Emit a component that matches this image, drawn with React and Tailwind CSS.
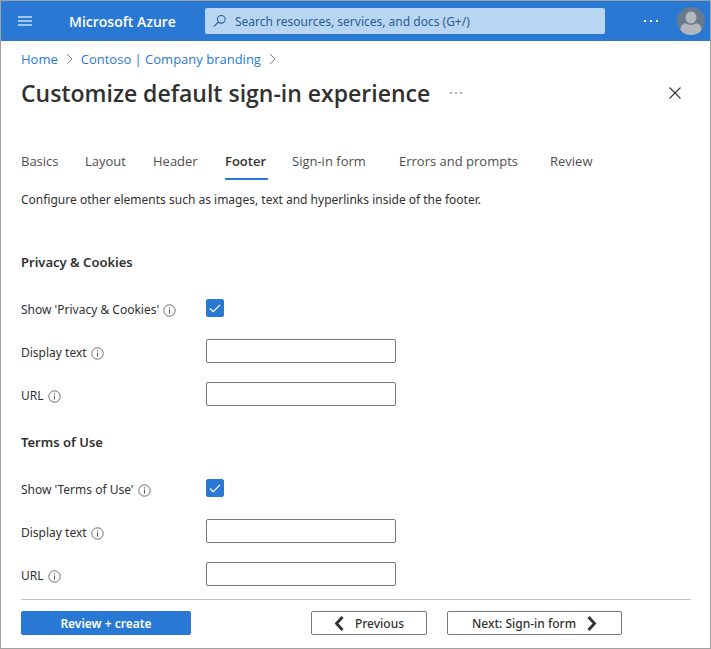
const tabs = [
  { label: "Basics", width: "w-[40px]" },
  { label: "Layout", width: "w-[44px]" },
  { label: "Header", width: "w-[48px]" },
  { label: "Footer", width: "w-[43px]", active: true },
  { label: "Sign-in form", width: "w-[83px]" },
  { label: "Errors and prompts", width: "w-[127px]" },
  { label: "Review", width: "w-[48px]" },
];

const sections = [
  { id: "privacy", title: "Privacy & Cookies", toggle: "Show 'Privacy & Cookies'" },
  { id: "terms", title: "Terms of Use", toggle: "Show 'Terms of Use'" },
];

function InfoIcon() {
  return (
    <svg width="13" height="13" viewBox="0 0 13 13" fill="none" stroke="#605e5c" className="shrink-0" aria-hidden="true">
      <circle cx="6.5" cy="6.5" r="5.700" strokeWidth="0.900" />
      <path d="M6.5 5.500v4.200M6.5 3.300v1.200" />
    </svg>
  );
}

function Crumb() {
  return (
    <svg width="7" height="12" viewBox="0 0 7 12" fill="none" stroke="#8a8886" className="shrink-0" aria-hidden="true">
      <path d="M1 1l5 5-5 5" />
    </svg>
  );
}

function FieldLabel({ htmlFor, children }) {
  return (
    <label htmlFor={htmlFor} className="flex w-[185px] shrink-0 items-center gap-1 whitespace-nowrap pt-1 text-[12px] leading-5">
      {children}
      <InfoIcon />
    </label>
  );
}

function TextRow({ id, label }) {
  return (
    <div className="flex h-6 items-center">
      <FieldLabel htmlFor={id}>{label}</FieldLabel>
      <input id={id} type="text" className="h-6 w-[190px] rounded-[2px] border border-[#7a7978] bg-white px-2 text-[12px] outline-none" />
    </div>
  );
}

function Section({ id, title, toggle }) {
  return (
    <section>
      <h2 className="text-[13px] font-semibold leading-6">{title}</h2>
      <div className="mt-[22px] flex flex-col gap-[19px]">
        <div className="flex h-6 items-center">
          <FieldLabel htmlFor={id + "-show"}>{toggle}</FieldLabel>
          <span className="grid place-items-center">
            <input id={id + "-show"} type="checkbox" defaultChecked className="peer col-start-1 row-start-1 size-[18px] appearance-none rounded-[2px] border border-[#7a7978] checked:border-[#2979d4] checked:bg-[#2979d4]" />
            <svg width="12" height="9" viewBox="0 0 12 9" fill="none" stroke="white" strokeWidth="1.2" className="pointer-events-none col-start-1 row-start-1 hidden peer-checked:block" aria-hidden="true">
              <path d="M1 4.5l3.2 3.2L11 1" />
            </svg>
          </span>
        </div>
        <TextRow id={id + "-text"} label="Display text" />
        <TextRow id={id + "-url"} label="URL" />
      </div>
    </section>
  );
}

export default function App() {
  return (
    <div className="border border-[#a0a0a0] bg-white font-['Noto_Sans','Open_Sans',sans-serif] text-[#323130]">
      <header className="flex h-10 items-center bg-[#2979d4] pl-[17px] pr-[5px] text-white">
        <button type="button" aria-label="Menu" className="shrink-0">
          <svg width="14" height="10" viewBox="0 0 14 10" fill="#a3c6ed" aria-hidden="true">
            <path d="M0 0h14v2H0zM0 4h14v2H0zM0 8h14v2H0z" />
          </svg>
        </button>
        <a href="#home" className="ml-[37px] w-[136px] shrink-0 whitespace-nowrap font-['Open_Sans',sans-serif] text-[14px] font-semibold">Microsoft Azure</a>
        <div className="flex h-[26px] min-w-0 flex-1 items-center gap-[9px] rounded-[2px] bg-[#b8d6f2] pl-2">
          <svg width="13" height="12" viewBox="0 0 13 12" fill="none" stroke="#2b5c96" strokeWidth="1.1" className="shrink-0" aria-hidden="true">
            <circle cx="8.3" cy="4.3" r="3.8" />
            <path d="M5.5 7L.7 11.6" />
          </svg>
          <input type="search" aria-label="Search" placeholder="Search resources, services, and docs (G+/)" className="min-w-0 flex-1 bg-transparent pt-px text-[12px] outline-none placeholder:text-[#2b5c96]" />
        </div>
        <button type="button" aria-label="More" className="ml-[39px] shrink-0">
          <svg width="14" height="2" viewBox="0 0 14 2" fill="white" aria-hidden="true">
            <path d="M0 0h2v2H0zM6 0h2v2H6zM12 0h2v2h-2z" />
          </svg>
        </button>
        <button type="button" aria-label="Account" className="ml-[19px] shrink-0">
          <svg width="28" height="28" viewBox="0 0 28 28" aria-hidden="true">
            <defs>
              <clipPath id="avatar"><circle cx="14" cy="14" r="14" /></clipPath>
            </defs>
            <g clipPath="url(#avatar)">
              <rect width="28" height="28" fill="#69798c" />
              <path d="M3.5 28v-5c0-4 2-6.500 5-6.500 2 0 3 1.500 5.500 1.500s3.500-1.500 5.500-1.500c3 0 5 2.500 5 6.500v5z" fill="#b2b7bd" />
              <ellipse cx="14" cy="10.500" rx="5.900" ry="6.400" fill="#b2b7bd" stroke="#69798c" strokeWidth="0.800" />
            </g>
          </svg>
        </button>
      </header>

      <div className="pl-5 pr-[19px]">
        <nav aria-label="Breadcrumb" className="flex items-center gap-2 whitespace-nowrap pt-2 font-['Open_Sans',sans-serif] text-[13px] leading-5 text-[#2979d4]">
          <a href="#home">Home</a>
          <Crumb />
          <a href="#branding">Contoso | Company branding</a>
          <Crumb />
        </nav>

        <div className="mt-2 flex h-8 items-center pr-[10px]">
          <h1 className="whitespace-nowrap font-['Open_Sans',sans-serif] text-[23px] font-semibold leading-8">Customize default sign-in experience</h1>
          <button type="button" aria-label="More options" className="ml-5">
            <svg width="12" height="2" viewBox="0 0 12 2" fill="#605e5c" aria-hidden="true">
              <path d="M0 .5h2v1H0zM5 .5h2v1H5zM10 .5h2v1h-2z" />
            </svg>
          </button>
          <button type="button" aria-label="Close" className="ml-auto">
            <svg width="12" height="12" viewBox="0 0 12 12" fill="none" stroke="#323130" strokeWidth="1.1" aria-hidden="true">
              <path d="M.5.5l11 11M11.500.5l-11 11" />
            </svg>
          </button>
        </div>

        <div role="tablist" className="mt-[42px] flex gap-6 font-['Open_Sans',sans-serif] text-[13px] leading-5 text-[#504e4c]">
          {tabs.map((tab) => (
            <button
              key={tab.label}
              type="button"
              role="tab"
              aria-selected={!!tab.active}
              className={`h-[29px] shrink-0 whitespace-nowrap border-b-2 pb-[7px] text-left ${tab.width} ${tab.active ? "border-[#2979d4] font-semibold text-[#323130]" : "border-transparent"}`}
            >
              {tab.label}
            </button>
          ))}
        </div>

        <p className="mt-[10px] text-[12px] leading-5">Configure other elements such as images, text and hyperlinks inside of the footer.</p>

        <form className="mt-10 flex flex-col gap-6">
          {sections.map((section) => (
            <Section key={section.id} {...section} />
          ))}
        </form>

        <footer className="mt-[13px] flex items-center border-t border-[#c8c6c4] pb-[13px] pt-[11px] text-[12px]">
          <button type="button" className="h-6 w-[170px] rounded-[2px] bg-[#2979d4] pt-px font-semibold text-white">Review + create</button>
          <button type="button" className="ml-[120px] flex h-6 w-[116px] items-center justify-center gap-[11px] rounded-[2px] border border-[#7a7978] pt-px font-medium">
            <svg width="10" height="15" viewBox="0 0 10 15" fill="none" stroke="#323130" strokeWidth="2.800" aria-hidden="true">
              <path d="M8.500 1L2.500 7.500l6 6.500" />
            </svg>
            Previous
          </button>
          <button type="button" className="ml-5 flex h-6 w-[175px] items-center justify-center gap-[11px] rounded-[2px] border border-[#7a7978] pt-px font-medium">
            Next: Sign-in form
            <svg width="10" height="15" viewBox="0 0 10 15" fill="none" stroke="#323130" strokeWidth="2.800" aria-hidden="true">
              <path d="M1.500 1l6 6.500-6 6.500" />
            </svg>
          </button>
        </footer>
      </div>
    </div>
  );
}
